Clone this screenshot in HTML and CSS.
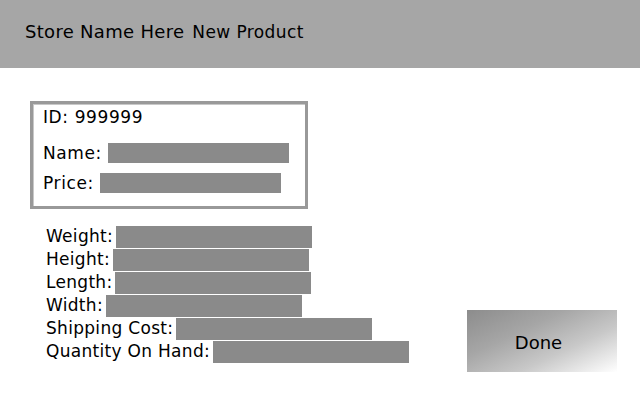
FILE: index.html
```html
<!DOCTYPE html>
<html>
<head>
<meta charset="utf-8">
<link rel="stylesheet" href="styles.css">
</head>
<body>
<header class="topbar">
  <span class="store">Store Name Here</span>
  <span class="title">New Product</span>
</header>
<main class="content">
  <section class="left">
    <div class="idbox">
      <div class="brow id">ID: 999999</div>
      <div class="brow name"><span class="blabel">Name:</span><span class="bfield"></span></div>
      <div class="brow price"><span class="blabel">Price:</span><span class="bfield"></span></div>
    </div>
    <div class="fields">
      <div class="frow"><span class="flabel">Weight:</span><span class="ffield"></span></div>
      <div class="frow"><span class="flabel">Height:</span><span class="ffield"></span></div>
      <div class="frow"><span class="flabel">Length:</span><span class="ffield"></span></div>
      <div class="frow"><span class="flabel">Width:</span><span class="ffield"></span></div>
      <div class="frow"><span class="flabel">Shipping Cost:</span><span class="ffield"></span></div>
      <div class="frow"><span class="flabel">Quantity On Hand:</span><span class="ffield"></span></div>
    </div>
  </section>
  <button class="done">Done</button>
</main>
</body>
</html>
```
FILE: styles.css
```css
body {
  margin: 0;
  padding: 0;
  background: #ffffff;
  font-family: "DejaVu Sans", sans-serif;
  font-size: 17px;
  letter-spacing: 0.3px;
  color: #000000;
}
.topbar {
  height: 68px;
  background: #a6a6a6;
  display: flex;
  align-items: center;
  padding-left: 25px;
  padding-bottom: 5px;
  box-sizing: border-box;
}
.store {
  font-family: "DejaVu Sans", sans-serif;
  font-size: 18px;
  margin-right: 8px;
}
.title {
  font-family: "DejaVu Sans", sans-serif;
  font-size: 17px;
  letter-spacing: 0.4px;
}
.content {
  display: flex;
  align-items: flex-start;
}
.left {
  padding-left: 30px;
  padding-top: 33px;
}
.idbox {
  width: 278px;
  height: 108px;
  box-sizing: border-box;
  border: 3px solid #999999;
  box-shadow: inset 1px 1px 0 #c8c8c8;
  padding: 3px 10px 13px 10px;
  letter-spacing: 0.6px;
}
.brow {
  height: 20px;
  display: flex;
  align-items: center;
  font-family: "DejaVu Sans", sans-serif;
}
.brow.name { margin-top: 16px; }
.brow.price { margin-top: 10px; }
.blabel { margin-right: 6px; }
.bfield {
  display: block;
  width: 181px;
  height: 20px;
  background: #8a8a8a;
}
.fields {
  margin-top: 17px;
  padding-left: 16px;
  display: flex;
  flex-direction: column;
  gap: 1px;
}
.frow {
  display: flex;
  align-items: center;
  height: 22px;
  font-family: "DejaVu Sans", sans-serif;
}
.flabel { margin-right: 3px; padding-bottom: 2px; }
.ffield {
  display: block;
  width: 196px;
  height: 22px;
  background: #8a8a8a;
}
.done {
  margin-left: auto;
  margin-right: 23px;
  margin-top: 242px;
  width: 150px;
  height: 62px;
  border: none;
  padding: 3px 7px 0 0;
  font-family: "DejaVu Sans", sans-serif;
  font-size: 18px;
  color: #000000;
  background: linear-gradient(155deg, #8c8c8c 0%, #a6a6a6 35%, #c8c8c8 65%, #ffffff 100%);
}
```
